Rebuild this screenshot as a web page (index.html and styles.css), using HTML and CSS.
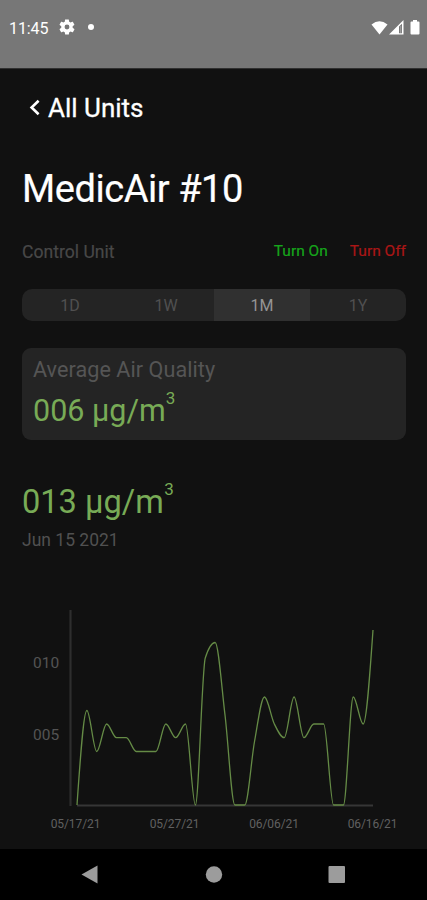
FILE: index.html
```html
<!DOCTYPE html>
<html lang="en">
<head>
<meta charset="utf-8">
<title>MedicAir #10</title>
<link rel="stylesheet" href="styles.css">
</head>
<body>
<header class="status">
  <span class="clock">11:45</span>
  <svg class="gear" width="16" height="16" viewBox="1.500 1.500 21 21"><path fill="#fff" fill-rule="evenodd" d="M19.4 13a7.5 7.5 0 0 0 0-2l2.1-1.7c.2-.1.3-.4.1-.6l-2-3.5c-.1-.2-.4-.3-.6-.2l-2.5 1a7.300 7.300 0 0 0-1.700-1l-.4-2.600c0-.2-.2-.4-.5-.4h-4c-.2 0-.5.2-.5.4L9.100 5a7.700 7.700 0 0 0-1.700 1l-2.500-1c-.2-.1-.5 0-.6.2l-2 3.500c-.1.2-.1.5.1.6L4.500 11a8 8 0 0 0 0 2l-2.100 1.700c-.2.1-.2.4-.1.6l2 3.500c.1.2.4.3.6.2l2.500-1a7.300 7.300 0 0 0 1.700 1l.4 2.600c0 .2.2.4.5.4h4c.2 0 .5-.2.5-.4l.4-2.600a7.700 7.700 0 0 0 1.700-1l2.500 1c.2.1.5 0 .6-.2l2-3.500c.1-.2.100-.5-.1-.6zM12 15.200a3.200 3.200 0 1 1 0-6.400 3.200 3.200 0 0 1 0 6.400z"/></svg>
  <span class="dot"></span>
  <svg class="signals" width="50" height="16" viewBox="0 0 50 16">
    <path fill="#fff" d="M1.500 4.500Q9.500-2 17.500 4.500L9.500 14.500z"/>
    <path fill="#fff" d="M19 14.500L33.500 0v14.500zM29 6.500v6.700h3V3.800z" fill-rule="evenodd"/>
    <rect x="30.200" y="6" width="1" height="7" fill="#fff" opacity=".35"/>
    <path fill="#fff" d="M43 0h4v1.500h1.500q1 0 1 1v11q0 1-1 1h-7q-1 0-1-1v-11q0-1 1-1H43z"/>
  </svg>
</header>
<main>
  <nav class="back">
    <svg width="11" height="18" viewBox="0 0 11 18"><path d="M9.600 1.800L2.600 8.500l7 6.700" fill="none" stroke="#fff" stroke-width="2.600"/></svg>
    <span>All Units</span>
  </nav>
  <h1>MedicAir #10</h1>
  <section class="control">
    <span class="label">Control Unit</span>
    <span class="on">Turn On</span>
    <span class="off">Turn Off</span>
  </section>
  <div class="tabs">
    <span>1D</span><span>1W</span><span class="active">1M</span><span>1Y</span>
  </div>
  <section class="card">
    <p class="title">Average Air Quality</p>
    <p class="value"><span>006 µg/m</span><small>3</small></p>
  </section>
  <section class="reading">
    <p class="value"><span>013 µg/m</span><small>3</small></p>
    <p class="date">Jun 15 2021</p>
  </section>
  <svg class="chart" width="427" height="240" viewBox="0 600 427 240">
    <path d="M70.500 610v196" stroke="#2e2e2e" stroke-width="2.200"/>
    <path d="M77 805.500H373" stroke="#363636" stroke-width="2"/>
    <path id="series" fill="none" stroke="#658b46" stroke-width="1.300"/>
    <g class="y-labels"><text x="33" y="668">010</text><text x="33" y="739.500">005</text></g>
    <g class="x-labels"><text x="75.500" y="828">05/17/21</text><text x="174.500" y="828">05/27/21</text><text x="274" y="828">06/06/21</text><text x="372.500" y="828">06/16/21</text></g>
  </svg>
</main>
<footer>
  <svg width="427" height="51" viewBox="0 0 427 51" fill="#9c9c9c"><path d="M81.500 25.500L97.500 16.500v18z"/><circle cx="214" cy="25.500" r="8.200"/><rect x="328.500" y="17" width="16.500" height="17" rx="1"/></svg>
</footer>
<script src="chart.js"></script>
</body>
</html>
```

FILE: styles.css
```css
* { box-sizing: border-box; }
body { margin: 0; width: 427px; height: 900px; overflow: hidden; background: #111; color: #fff; font-family: Roboto, sans-serif; display: flex; flex-direction: column; }
p, h1 { margin: 0; font-weight: 400; white-space: nowrap; }
.status { height: 69px; flex: none; background: #777; border-bottom: 1px solid #303030; display: flex; align-items: flex-start; padding: 19px 7px 0 9px; }
.clock { font-size: 16px; line-height: 19px; width: 50px; letter-spacing: -.1px; }
.dot { width: 6px; height: 6px; border-radius: 50%; background: #fff; margin: 5px 0 0 13px; }
.signals { margin: 1px 0 0 auto; }
main { height: 780px; flex: none; display: flex; flex-direction: column; }
.back { display: flex; align-items: center; margin: 22px 0 0 29px; height: 34px; gap: 8px; font-size: 26px; -webkit-text-stroke: .3px #fff; }
h1 { font-size: 38px; line-height: 46px; letter-spacing: -.45px; margin: 41px 0 0 22px; -webkit-text-stroke: .2px #fff; }
.control { display: flex; margin: 27px 21px 0 22px; height: 24px; line-height: 24px; font-size: 15.500px; -webkit-text-stroke: .2px; }
.label { font-size: 17.600px; color: #484848; margin-right: auto; line-height: 26px; }
.on { color: #16a51b; margin-right: 22px; }
.off { color: #ab1616; }
.tabs { display: flex; margin: 26px 21px 0 22px; height: 32px; border-radius: 10px; overflow: hidden; background: #242424; color: #505050; font-size: 16px; line-height: 34px; text-align: center; }
.tabs span { flex: 1; }
.tabs .active { background: #303030; color: #959595; }
.card { margin: 27px 21px 0 22px; height: 92px; border-radius: 9px; background: #242424; padding: 8px 11px; }
.title { font-size: 21.600px; letter-spacing: .05px; line-height: 28px; color: #555; }
.value { display: flex; font-size: 32.600px; line-height: 38px; color: #78ab56; }
.value small { font-size: 17px; line-height: 20px; margin: -4px 0 0 .5px; }
.card .value { margin-top: 8px; font-size: 30.500px; }
.card .value small { margin: -4px 0 0 0; }
.reading { margin: 43px 0 0 22px; height: 77px; }
.date { font-size: 17.500px; line-height: 24px; color: #505050; margin-top: 7px; }
.chart { margin-top: 40px; flex: none; }
.chart text { font-family: Roboto, sans-serif; }
.y-labels { font-size: 15.500px; fill: #545454; }
.x-labels { font-size: 12px; letter-spacing: -.1px; fill: #606060; text-anchor: middle; }
footer { height: 51px; flex: none; background: #000; }
footer svg { display: block; }
```

FILE: chart.js
```js
const ys = [805, 710.5, 751.5, 724, 737.7, 737.7, 751.5, 751.5, 751.5, 724, 737.7, 724, 805, 658, 642.5, 715, 805, 805, 741, 697, 724, 737.7, 697, 737.7, 724, 724, 805, 805, 697, 724, 630];
const step = 296 / (ys.length - 1);
const slopes = ys.slice(1).map((y, i) => (y - ys[i]) / step);
// Monotone tangents: flat at every local extreme.
const tangents = ys.map((_, i) => {
  if (i === 0) return slopes[0] * 1.5;
  if (i === ys.length - 1) return slopes[i - 1] * 1.5;
  const a = slopes[i - 1], b = slopes[i];
  return a * b <= 0 ? 0 : Math.sign(a) * Math.min(2 * Math.abs(a), 2 * Math.abs(b), Math.abs(a + b) / 2);
});
let d = `M77 ${ys[0]}`;
for (let i = 1; i < ys.length; i++) {
  const x = 77 + i * step, h = step / 3;
  d += `C${x - step + h} ${ys[i - 1] + tangents[i - 1] * h} ${x - h} ${ys[i] - tangents[i] * h} ${x} ${ys[i]}`;
}
document.getElementById('series').setAttribute('d', d);
```
